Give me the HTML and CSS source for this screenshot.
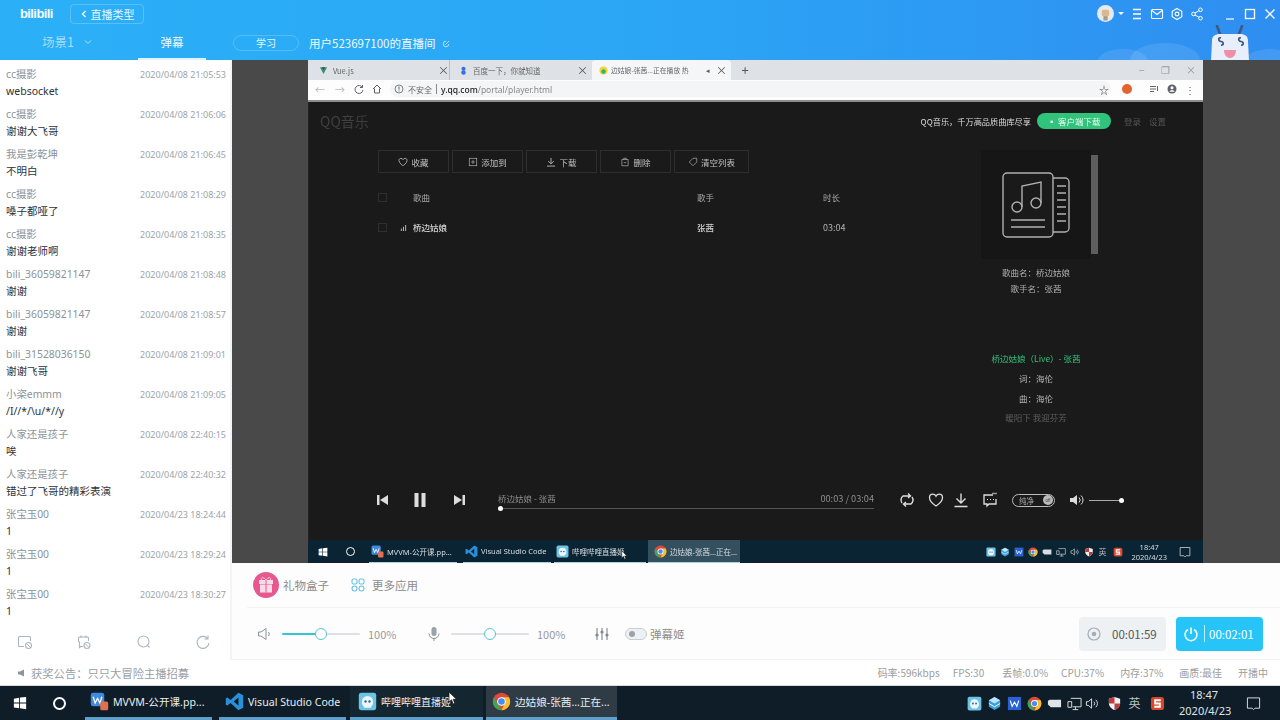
FILE: index.html
```html
<!DOCTYPE html>
<html lang="zh-CN">
<head>
<meta charset="utf-8">
<title>哔哩哔哩直播姬</title>
<link rel="stylesheet" href="styles.css">
</head>
<body>
<svg class="defs" width="0" height="0" aria-hidden="true">
  <symbol id="win" viewBox="0 0 16 16"><path fill="currentColor" d="M1 3l6-1v5.500H1zM8 1.800L15 1v6.500H8zM1 8.500h6V14l-6-1zM8 8.500h7V15l-7-1z"/></symbol>
  <symbol id="chrome" viewBox="0 0 24 24"><circle cx="12" cy="12" r="11" fill="#e0483a"/><path fill="#3aa757" d="M12 23a11 11 0 0 1-9.500-16.500l6 10.500z"/><path fill="#f6c02c" d="M12 23a11 11 0 0 0 9.500-16.500H12l3 10z"/><circle cx="12" cy="12" r="5.500" fill="#fff"/><circle cx="12" cy="12" r="4.200" fill="#4a8df0"/></symbol>
  <symbol id="vs" viewBox="0 0 24 24"><path fill="#2a8fd8" d="M17 1l6 3v16l-6 3L7 14l-4 3-2-1V8l2-1 4 3zM17 7l-6 5 6 5z"/></symbol>
  <symbol id="wps" viewBox="0 0 24 24"><rect x="1" y="1" width="17" height="17" rx="3" fill="#3f8ae0"/><path d="M4 6l2.500 8L9.500 8l3 6L15 6" fill="none" stroke="#fff" stroke-width="1.600"/><rect x="13" y="12" width="10" height="11" rx="2" fill="#e0714f"/></symbol>
  <symbol id="bili" viewBox="0 0 24 24"><rect x="1" y="1" width="22" height="22" rx="3" fill="#6cc3e4"/><path fill="#eaf6fb" d="M5 12a7 7 0 0 1 14 0v3l-3 5H8l-3-5z"/><circle cx="9.500" cy="12" r="1.500" fill="#2a6a90"/><circle cx="14.500" cy="12" r="1.500" fill="#2a6a90"/></symbol>
  <symbol id="box" viewBox="0 0 16 16"><path fill="#3aa0dc" d="M8 1l6 3.500v7L8 15l-6-3.500v-7z"/><path fill="#bfe3f7" d="M8 1l6 3.500L8 8 2 4.500z"/><path fill="none" stroke="#fff" d="M2 8l6 3.500L14 8"/></symbol>
  <symbol id="wbox" viewBox="0 0 16 16"><rect x="1" y="1" width="14" height="14" fill="#2a62d4"/><path d="M3.500 5l2 6L8 6.500l2.500 4.500 2-6" fill="none" stroke="#fff" stroke-width="1.200"/></symbol>
  <symbol id="net" viewBox="0 0 16 16"><path fill="currentColor" d="M1 5l2-1h12v8H4L1 9z"/></symbol>
  <symbol id="mon" viewBox="0 0 16 16"><path fill="none" stroke="currentColor" d="M4 2.500h11v9H6M9 11.500v3M6 14.500h6M1 6h4v6H1z"/></symbol>
  <symbol id="vol" viewBox="0 0 16 16"><path fill="none" stroke="currentColor" d="M1.500 6v4h2L7 13V3L3.500 6zM9.500 6a3 3 0 0 1 0 4M11.500 4a6 6 0 0 1 0 8"/></symbol>
  <symbol id="shield" viewBox="0 0 16 16"><path fill="#eef2f5" d="M8 1l6 2v5c0 3-3 6-6 7-3-1-6-4-6-7V3z"/><path fill="#c23b3b" d="M8 1v7H2V3zM8 8h6c0 3-3 6-6 7z"/></symbol>
  <symbol id="sogou" viewBox="0 0 16 16"><rect x="1" y="1" width="14" height="14" rx="3" fill="#d9472b"/><path fill="none" stroke="#fff" stroke-width="2" d="M11.500 4.500h-6v3.500h5v3.500h-6"/></symbol>
  <symbol id="note" viewBox="0 0 16 16"><path fill="none" stroke="currentColor" d="M1.500 2h13v11h-5L8 14.500 6.500 13h-5z"/></symbol>
  <symbol id="heart" viewBox="0 0 16 16"><path fill="none" stroke="currentColor" stroke-width="1.300" d="M8 14S1.500 9.800 1.500 5.500C1.500 3.500 3 2.200 4.800 2.200 6.200 2.200 7.400 3 8 4.200 8.600 3 9.800 2.200 11.200 2.200c1.800 0 3.300 1.300 3.300 3.300C14.500 9.800 8 14 8 14z"/></symbol>
  <symbol id="dl" viewBox="0 0 16 16"><path fill="none" stroke="currentColor" stroke-width="1.400" d="M8 1.500v9M3.500 6.500L8 11l4.500-4.500M1.500 14.500h13"/></symbol>
  <symbol id="cursor" viewBox="0 0 10 14"><path fill="#fff" stroke="#111" stroke-width=".7" d="M1 1v10l2.500-2.200L5.200 13l1.600-.7L5.200 8.300H8.500z"/></symbol>
</svg>

<div class="app">
  <header class="top">
    <div class="clouds"><i class="c1"></i><i class="c2"></i><i class="c3"></i></div>
    <div class="top-row1">
      <span class="logo">bilibili</span>
      <button class="back"><svg class="ic8" viewBox="0 0 8 8"><path d="M5.500 1L2.500 4l3 3" fill="none" stroke="#fff" stroke-width="1.200"/></svg>直播类型</button>
      <div class="win-tools">
        <span class="avatar"><svg viewBox="0 0 16 16"><circle cx="8" cy="8" r="8" fill="#e6e9ee"/><rect x="4.500" y="4.500" width="7" height="6" rx="1.500" fill="#d9b98f"/><rect x="6" y="10.500" width="4" height="4" fill="#a89a88"/></svg></span>
        <span class="caret"></span>
        <svg class="ic tool-menu" viewBox="0 0 14 14"><path d="M3 2.500h8M3 7h8M3 11.500h8" stroke="#fff" stroke-width="1.300" fill="none"/></svg>
        <svg class="ic" viewBox="0 0 14 14"><rect x="1.500" y="2.500" width="11" height="9" rx="1" fill="none" stroke="#fff" stroke-width="1.100"/><path d="M2 3.500l5 4 5-4" fill="none" stroke="#fff" stroke-width="1.100"/></svg>
        <svg class="ic" viewBox="0 0 14 14"><path d="M7 1.500l4.800 2.700v5.600L7 12.500 2.200 9.800V4.200z" fill="none" stroke="#fff" stroke-width="1.100"/><circle cx="7" cy="7" r="1.900" fill="none" stroke="#fff" stroke-width="1.100"/></svg>
        <svg class="ic" viewBox="0 0 14 14"><circle cx="3.500" cy="7" r="1.800" fill="none" stroke="#fff"/><circle cx="10.500" cy="2.800" r="1.800" fill="none" stroke="#fff"/><circle cx="10.500" cy="11.200" r="1.800" fill="none" stroke="#fff"/><path d="M5 6l4-2.300M5 8l4 2.300" stroke="#fff"/></svg>
        <svg class="ic gap-l" viewBox="0 0 14 14"><path d="M3 12h8" stroke="#fff" stroke-width="1.200"/></svg>
        <svg class="ic" viewBox="0 0 14 14"><rect x="2.500" y="2.500" width="9" height="9" fill="none" stroke="#fff" stroke-width="1.300"/></svg>
        <svg class="ic" viewBox="0 0 14 14"><path d="M2.500 2.500l9 9M11.500 2.500l-9 9" stroke="#fff" stroke-width="1.300"/></svg>
      </div>
    </div>
    <div class="top-row2">
      <span class="scene">场景1<svg class="ic8" viewBox="0 0 8 8"><path d="M1 2.500l3 3 3-3" fill="none" stroke="#bfe3fb" stroke-width="1"/></svg></span>
      <span class="tab-danmu">弹幕</span>
      <span class="study">学习</span>
      <span class="room">用户523697100的直播间</span>
      <svg class="ic8 edit" viewBox="0 0 8 8"><path d="M6.800 4A2.800 2.800 0 1 1 4 1.200M3.500 4.500L7 1" fill="none" stroke="#bfe3fb" stroke-width=".9"/></svg>
    </div>
    <svg class="mascot" viewBox="0 0 44 36">
      <path d="M12 9L9 1M31 9l3-8" stroke="#3e5a82" stroke-width="2.600" fill="none" stroke-linecap="round"/>
      <path d="M4 16c0-5 3-7 8-7h20c5 0 8 2 8 7l1 20H3z" fill="#e9eefb"/>
      <path d="M13 13c-3-1-3 3 0 3.500s3 4 0 3.500M33 13c-3-1-3 3 0 3.500s3 4 0 3.500" stroke="#3e5a82" stroke-width="1.700" fill="none"/>
      <path d="M16 25h12c0 5-3 8-6 8s-6-3-6-8z" fill="#ee8fa6"/>
    </svg>
  </header>

  <div class="main">
    <aside class="side">
      <ul class="msgs">
        <li><div class="meta"><span>cc摄影</span><time>2020/04/08 21:05:53</time></div><p>websocket</p></li>
        <li><div class="meta"><span>cc摄影</span><time>2020/04/08 21:06:06</time></div><p>谢谢大飞哥</p></li>
        <li><div class="meta"><span>我是彭乾坤</span><time>2020/04/08 21:06:45</time></div><p>不明白</p></li>
        <li><div class="meta"><span>cc摄影</span><time>2020/04/08 21:08:29</time></div><p>嗓子都哑了</p></li>
        <li><div class="meta"><span>cc摄影</span><time>2020/04/08 21:08:35</time></div><p>谢谢老师啊</p></li>
        <li><div class="meta"><span>bili_36059821147</span><time>2020/04/08 21:08:48</time></div><p>谢谢</p></li>
        <li><div class="meta"><span>bili_36059821147</span><time>2020/04/08 21:08:57</time></div><p>谢谢</p></li>
        <li><div class="meta"><span>bili_31528036150</span><time>2020/04/08 21:09:01</time></div><p>谢谢飞哥</p></li>
        <li><div class="meta"><span>小栥emmm</span><time>2020/04/08 21:09:05</time></div><p>/I//*/\u/*//y</p></li>
        <li><div class="meta"><span>人家还是孩子</span><time>2020/04/08 22:40:15</time></div><p>唉</p></li>
        <li><div class="meta"><span>人家还是孩子</span><time>2020/04/08 22:40:32</time></div><p>错过了飞哥的精彩表演</p></li>
        <li><div class="meta"><span>张宝玉00</span><time>2020/04/23 18:24:44</time></div><p>1</p></li>
        <li><div class="meta"><span>张宝玉00</span><time>2020/04/23 18:29:24</time></div><p>1</p></li>
        <li><div class="meta"><span>张宝玉00</span><time>2020/04/23 18:30:27</time></div><p>1</p></li>
      </ul>
      <div class="side-tools">
        <svg viewBox="0 0 16 16"><path d="M7 12.500H2.500a1 1 0 0 1-1-1v-8a1 1 0 0 1 1-1h10a1 1 0 0 1 1 1V7" fill="none" stroke="#a9b6c2" stroke-width="1.100"/><circle cx="11.500" cy="11.500" r="3" fill="none" stroke="#a9b6c2" stroke-width="1.100"/><path d="M9.500 9.500l4 4" stroke="#a9b6c2"/></svg>
        <svg viewBox="0 0 16 16"><path d="M7 12.500H4.500l-1 1V8a1 1 0 0 1-1-1V4a1 1 0 0 1 1-1h8a1 1 0 0 1 1 1v3M5 1.500V4M10 1.500V4" fill="none" stroke="#a9b6c2" stroke-width="1.100"/><circle cx="11" cy="11.500" r="3" fill="none" stroke="#a9b6c2" stroke-width="1.100"/><path d="M9 9.500l4 4" stroke="#a9b6c2"/></svg>
        <svg viewBox="0 0 16 16"><circle cx="7.500" cy="7.500" r="5.500" fill="none" stroke="#a9b6c2" stroke-width="1.100"/><path d="M11.500 11.500l2 2" stroke="#a9b6c2" stroke-width="1.100"/></svg>
        <svg viewBox="0 0 16 16"><path d="M13 5a6 6 0 1 0 1 4M13 1.500V5H9.500" fill="none" stroke="#a9b6c2" stroke-width="1.100"/></svg>
      </div>
    </aside>

    <section class="right">
      <div class="stage">
        <div class="video">
          <div class="tabs">
            <div class="tab t1"><svg class="fav" viewBox="0 0 10 10"><path d="M1 1.500h8L5 9z" fill="#3f8f6e"/><path d="M3.300 1.500h3.400L5 4.500z" fill="#34495e"/></svg><span>Vue.js</span><b>×</b></div>
            <div class="tab t2"><svg class="fav" viewBox="0 0 10 10"><circle cx="5" cy="3" r="2.300" fill="#3a6fe0"/><circle cx="5" cy="7.200" r="2.500" fill="#3a6fe0"/></svg><span>百度一下，你就知道</span><b>×</b></div>
            <div class="tab t3"><svg class="fav" viewBox="0 0 10 10"><circle cx="5" cy="5" r="4.500" fill="#f5d33b"/><circle cx="5" cy="6" r="2.500" fill="#31b56d"/></svg><span>边姑娘-张茜...正在播放 热</span><em>◂</em><b>×</b></div>
            <span class="plus">+</span>
            <div class="cw"><span>−</span><span>❐</span><span>×</span></div>
          </div>
          <div class="addr">
            <span class="nav">←</span><span class="nav">→</span>
            <svg class="nav-ic" viewBox="0 0 10 10"><path d="M8.500 3.500A4 4 0 1 0 9 6M8.500 1v2.500H6" fill="none" stroke="#5f6368"/></svg>
            <svg class="nav-ic" viewBox="0 0 10 10"><path d="M1 5l4-4 4 4M2.500 4.500V9h5V4.500" fill="none" stroke="#5f6368"/></svg>
            <div class="omni">
              <svg class="nav-ic" viewBox="0 0 10 10"><circle cx="5" cy="5" r="4" fill="none" stroke="#5f6368" stroke-width=".8"/><path d="M5 2.500v3M5 6.500v1" stroke="#5f6368"/></svg>
              <span class="unsafe">不安全</span><i class="bar"></i><span class="url"><strong>y.qq.com</strong>/portal/player.html</span>
              <span class="star">☆</span>
            </div>
            <i class="ext"></i>
            <svg class="nav-ic" viewBox="0 0 10 10"><path d="M1 2.500h6M1 5h6M1 7.500h4M8.500 2v5" stroke="#5f6368" fill="none"/></svg>
            <svg class="nav-ic" viewBox="0 0 10 10"><circle cx="5" cy="5" r="4.500" fill="#5f6368"/><circle cx="5" cy="3.800" r="1.500" fill="#fff"/><path d="M2.300 7.800a3 3 0 0 1 5.400 0" fill="#fff"/></svg>
            <span class="dots">⋮</span>
          </div>
          <div class="page">
            <div class="page-head">
              <span class="qq">QQ音乐</span>
              <span class="slogan">QQ音乐，千万高品质曲库尽享</span>
              <span class="get">▪ 客户端下载</span>
              <span class="ghost login">登录</span><span class="ghost">设置</span>
            </div>
            <div class="page-body">
              <div class="list">
                <div class="bar-btns">
                  <span class="bbtn"><svg><use href="#heart"/></svg>收藏</span>
                  <span class="bbtn"><svg viewBox="0 0 16 16"><rect x="2" y="2" width="12" height="12" fill="none" stroke="currentColor"/><path d="M8 5v6M5 8h6" stroke="currentColor"/></svg>添加到</span>
                  <span class="bbtn"><svg><use href="#dl"/></svg>下载</span>
                  <span class="bbtn"><svg viewBox="0 0 16 16"><path d="M3 4h10v10H3zM6 4V2h4v2M6 9h4" fill="none" stroke="currentColor"/></svg>删除</span>
                  <span class="bbtn wide"><svg viewBox="0 0 16 16"><path d="M2 8l6-6h6v6l-6 6z" fill="none" stroke="currentColor"/></svg>清空列表</span>
                </div>
                <div class="trow head"><i class="chk"></i><span></span><span>歌曲</span><span>歌手</span><span>时长</span></div>
                <div class="trow song"><i class="chk"></i><svg class="eq" viewBox="0 0 8 8"><path d="M1 8V5h1v3zM3.500 8V3h1v5zM6 8V1h1v7z" fill="#ccc"/></svg><span>桥边姑娘</span><span>张茜</span><span>03:04</span></div>
              </div>
              <div class="info">
                <div class="cover">
                  <svg viewBox="0 0 70 66"><path d="M52 6h12a4 4 0 0 1 4 4v46a4 4 0 0 1-4 4H52" fill="none" stroke="#b0b0b0" stroke-width="1.400"/><rect x="2" y="1" width="50" height="64" rx="4" fill="#1a1a1a" stroke="#b0b0b0" stroke-width="1.400"/><path d="M56 14h9M56 21h9M56 28h9M56 35h9M56 42h9M56 49h9M10 48h34M10 55h34" stroke="#b0b0b0" stroke-width="1.300"/><circle cx="16" cy="35" r="5" fill="none" stroke="#b0b0b0" stroke-width="1.400"/><circle cx="35" cy="31" r="5" fill="none" stroke="#b0b0b0" stroke-width="1.400"/><path d="M21 35V14l19-4v21" fill="none" stroke="#b0b0b0" stroke-width="1.400"/></svg>
                  <i class="thumb-bar"></i>
                </div>
                <p class="meta-line">歌曲名：桥边姑娘</p>
                <p class="meta-line">歌手名：张茜</p>
                <p class="lyric now">桥边姑娘（Live）- 张茜</p>
                <p class="lyric">词：海伦</p>
                <p class="lyric">曲：海伦</p>
                <p class="lyric dim">暖阳下 我迎芬芳</p>
              </div>
            </div>
            <div class="player">
              <svg class="pi first" viewBox="0 0 16 16"><path d="M3 3h2.500v10H3zM14 3v10L6 8z" fill="#ddd"/></svg>
              <svg class="pi" viewBox="0 0 16 16"><path d="M2.500 1H6.500v14H2.500zM9.500 1h4v14h-4z" fill="#ddd"/></svg>
              <svg class="pi next" viewBox="0 0 16 16"><path d="M13 3h-2.500v10H13zM2 3v10l8-5z" fill="#ddd"/></svg>
              <div class="prog">
                <div class="prog-text"><span>桥边姑娘 - 张茜</span><span class="prog-time">00:03 / 03:04</span></div>
                <div class="prog-line"><i></i></div>
              </div>
              <svg class="pi loop" viewBox="0 0 16 16"><path d="M3 11a5 5 0 0 1 1-7h7M9 1.500L11.500 4 9 6M13 5a5 5 0 0 1-1 7H5M7 14.500L4.500 12 7 10" fill="none" stroke="#ddd" stroke-width="1.400"/></svg>
              <svg class="pi ctl"><use href="#heart"/></svg>
              <svg class="pi ctl dl"><use href="#dl"/></svg>
              <svg class="pi ctl" viewBox="0 0 16 16"><path d="M11 3H2v9h3v2l2-2h7V7" fill="none" stroke="#ddd" stroke-width="1.300"/><path d="M5 7.500h1M8 7.500h1M11 7.500h1" stroke="#ddd"/><path d="M10 1.500h5" stroke="#999" stroke-width="1.500"/></svg>
              <span class="pure">纯净<i>off</i></span>
              <svg class="pi ctl-s" viewBox="0 0 16 16"><path d="M1 6v4h3l4 3V3L4 6z" fill="#ddd"/><path d="M10 5.500a3.500 3.500 0 0 1 0 5M12 3.500a6 6 0 0 1 0 9" fill="none" stroke="#ddd"/></svg>
              <div class="vol"><i></i></div>
            </div>
          </div>
          <div class="os">
            <svg class="os-win"><use href="#win"/></svg>
            <i class="os-circle"></i>
            <div class="os-task"><svg><use href="#wps"/></svg>MVVM-公开课.pp...</div>
            <div class="os-task w2"><svg><use href="#vs"/></svg>Visual Studio Code</div>
            <div class="os-task w3"><svg><use href="#bili"/></svg>哔哩哔哩直播姬</div>
            <div class="os-task w3 on"><svg><use href="#chrome"/></svg>边姑娘-张茜...正在...</div>
            <div class="os-tray">
              <svg><use href="#bili"/></svg><svg><use href="#box"/></svg><svg><use href="#wbox"/></svg><svg><use href="#chrome"/></svg><svg><use href="#net"/></svg><svg><use href="#mon"/></svg><svg><use href="#vol"/></svg><svg><use href="#shield"/></svg><span class="ime">英</span><svg class="os-sogou"><use href="#sogou"/></svg>
              <div class="os-clock">18:47<br>2020/4/23</div>
              <svg class="os-note"><use href="#note"/></svg>
            </div>
          </div>
          <svg class="cursor-small"><use href="#cursor"/></svg>
        </div>
      </div>

      <div class="ctrl">
        <div class="ctrl-a">
          <svg class="gift" viewBox="0 0 26 26"><circle cx="13" cy="13" r="13" fill="#e6588e"/><rect x="6" y="8" width="14" height="4" fill="#fbdbe8"/><rect x="7" y="12.500" width="12" height="8" fill="#fbdbe8"/><path d="M13 8v12.500" stroke="#e6588e"/><path d="M13 8c-3-4-6-2-4 0M13 8c3-4 6-2 4 0" fill="none" stroke="#fbdbe8"/></svg>
          <span>礼物盒子</span>
          <svg class="apps" viewBox="0 0 14 14"><g fill="none" stroke="#6cc0e0" stroke-width="1.100"><rect x="1" y="1" width="5" height="5" rx="1.500"/><rect x="8" y="1" width="5" height="5" rx="1.500"/><circle cx="3.500" cy="10.500" r="2.500"/><circle cx="10.500" cy="10.500" r="2.500"/></g></svg>
          <span>更多应用</span>
        </div>
        <div class="ctrl-b">
          <svg class="ci" viewBox="0 0 16 16"><path d="M1.500 6v4h2.500l5 3.500v-11L4 6z" fill="none" stroke="#8a929a"/><path d="M11.500 6a3 3 0 0 1 0 4" fill="none" stroke="#8a929a"/></svg>
          <div class="slider on"><i></i></div>
          <span class="pct">100%</span>
          <svg class="ci mic" viewBox="0 0 16 16"><rect x="5.500" y="1" width="5" height="9" rx="2.500" fill="#9aa2aa"/><path d="M3 7.500a5 5 0 0 0 10 0M8 12.500V15" fill="none" stroke="#8a929a"/></svg>
          <div class="slider"><i></i></div>
          <span class="pct">100%</span>
          <svg class="ci mix" viewBox="0 0 16 16"><path d="M3 2v12M8 2v12M13 2v12" stroke="#7f878f" stroke-width="1.100"/><circle cx="3" cy="9" r="1.600" fill="#7f878f"/><circle cx="8" cy="6" r="1.600" fill="#7f878f"/><circle cx="13" cy="9" r="1.600" fill="#7f878f"/></svg>
          <span class="toggle"><i></i></span>
          <span class="dmj">弹幕姬</span>
          <div class="timer gray"><svg viewBox="0 0 16 16"><circle cx="8" cy="8" r="6" fill="none" stroke="#a5adb5" stroke-width="1.200"/><circle cx="8" cy="8" r="2.300" fill="#a5adb5"/></svg><span>00:01:59</span></div>
          <div class="timer blue"><svg viewBox="0 0 16 16"><path d="M5 3.500a6 6 0 1 0 6 0M8 1.500V8" fill="none" stroke="#fff" stroke-width="1.500"/></svg><i></i><span>00:02:01</span></div>
        </div>
      </div>
    </section>
  </div>

  <div class="status">
    <div class="notice"><svg viewBox="0 0 10 10"><path d="M1 3.500v3h2l4 2v-7l-4 2z" fill="#8c949c"/></svg>获奖公告：只只大冒险主播招募</div>
    <div class="stats"><span>码率:596kbps</span><span>FPS:30</span><span>丢帧:0.0%</span><span>CPU:37%</span><span>内存:37%</span><span>画质:最佳</span><span>开播中</span></div>
  </div>

  <footer class="bar-os">
    <svg class="w-ic"><use href="#win"/></svg>
    <i class="w-circle"></i>
    <div class="task"><svg><use href="#wps"/></svg>MVVM-公开课.pp...</div>
    <div class="task t-vs"><svg><use href="#vs"/></svg>Visual Studio Code</div>
    <div class="task wide"><svg><use href="#bili"/></svg>哔哩哔哩直播姬</div>
    <div class="task on"><svg><use href="#chrome"/></svg>边姑娘-张茜...正在...</div>
    <div class="tray">
      <svg><use href="#bili"/></svg><svg><use href="#box"/></svg><svg><use href="#wbox"/></svg><svg><use href="#chrome"/></svg><svg><use href="#net"/></svg><svg><use href="#mon"/></svg><svg class="vol-ic"><use href="#vol"/></svg><svg class="sh-ic"><use href="#shield"/></svg><span class="ime">英</span><svg class="sg-ic"><use href="#sogou"/></svg>
      <div class="clock">18:47<br>2020/4/23</div>
      <svg class="note"><use href="#note"/></svg>
    </div>
  </footer>
  <svg class="cursor-big"><use href="#cursor"/></svg>
</div>
</body>
</html>
```
FILE: styles.css
```css
* { box-sizing: border-box; }
html, body { margin: 0; padding: 0; }
body { font-family: "Noto Sans", "Noto Sans CJK SC", sans-serif; background: #fff; color: #333; overflow: hidden; }
p, ul { margin: 0; padding: 0; list-style: none; }
.defs { position: absolute; }
.app { position: relative; width: 1280px; height: 720px; display: flex; flex-direction: column; overflow: hidden; }

/* header */
.top { position: relative; height: 60px; flex: none; background: linear-gradient(90deg, #2bb0f7 0%, #2ba6f5 50%, #2f8ef1 100%); color: #fff; overflow: hidden; }
.clouds i { position: absolute; background: rgba(255,255,255,.1); border-radius: 50%; }
.clouds .c1 { left: 1098px; top: 49px; width: 50px; height: 24px; }
.clouds .c2 { left: 1130px; top: 43px; width: 70px; height: 34px; }
.clouds .c3 { left: 1245px; top: 49px; width: 50px; height: 24px; }
.top-row1 { height: 27px; display: flex; align-items: center; padding-left: 20px; }
.logo { width: 50px; font: bold 13px/16px "Liberation Sans", sans-serif; letter-spacing: -.6px; color: #f3fbff; }
.back { width: 74px; height: 20px; display: flex; align-items: center; justify-content: center; gap: 3px; padding: 0; color: #e6f6ff; font: 11px/18px "Noto Sans CJK SC", sans-serif; background: transparent; border: 1px solid rgba(255,255,255,.22); border-radius: 4px; }
.ic8 { width: 8px; height: 8px; flex: none; }
.win-tools { margin-left: auto; display: flex; align-items: center; padding-right: 3px; gap: 6px; }
.avatar { width: 17px; height: 17px; }
.avatar svg { display: block; width: 17px; height: 17px; }
.caret { width: 0; height: 0; margin-left: -2px; border: 3px solid transparent; border-top-color: #fff; border-bottom: 0; }
.ic { width: 14px; height: 14px; flex: none; }
.tool-menu { margin-left: 0; }
.gap-l { margin-left: 13px; }
.top-row2 { position: relative; height: 33px; display: flex; align-items: flex-start; padding-top: 6px; font-size: 12px; line-height: 18px; font-family: "Noto Sans CJK SC", sans-serif; }
.scene { width: 96px; margin-left: 42px; display: flex; align-items: center; gap: 10px; font-size: 12.500px; color: #a9dcfb; }
.tab-danmu { width: 68px; height: 26.500px; margin-left: 0; text-align: center; font-size: 11.500px; border-bottom: 2px solid #dff4ff; color: #f1faff; }
.study { width: 66px; height: 16px; margin: 2px 0 0 27px; border: 1px solid rgba(255,255,255,.2); border-radius: 8px; text-align: center; font-size: 10px; line-height: 14px; color: #e6f6ff; }
.room { margin: 1px 0 0 10px; font-size: 11.500px; color: #eef9ff; white-space: nowrap; }
.edit { margin: 7px 0 0 7px; }
.mascot { position: absolute; left: 1208px; top: 25px; width: 44px; height: 36px; }

/* main */
.main { height: 600px; flex: none; display: flex; }
.side { width: 232px; flex: none; display: flex; flex-direction: column; background: #fff; border-right: 2px solid #f3f4f6; }
.msgs { padding: 6px 4px 0 6px; height: 574px; overflow: hidden; }
.msgs li { height: 40px; }
.meta { display: flex; justify-content: space-between; align-items: center; height: 17px; font-size: 10.400px; line-height: 17px; color: #8b9299; }
.meta time { font-size: 9px; color: #9da3a9; }
.msgs p { font-size: 10.500px; line-height: 17px; height: 17px; color: #2e3338; }
.side-tools { display: flex; justify-content: space-between; padding: 0 19px 0 17px; }
.side-tools svg { width: 16px; height: 16px; }
.right { flex: 1; display: flex; flex-direction: column; min-width: 0; }
.stage { height: 503px; flex: none; background: #494949; padding-left: 76px; }

/* captured video */
.video { position: relative; width: 895px; height: 503px; display: flex; flex-direction: column; filter: blur(.35px); font-family: "Noto Sans CJK SC", sans-serif; }
.tabs { height: 20px; flex: none; display: flex; background: #dee1e6; font-size: 7.500px; color: #666; align-items: stretch; padding-left: 2px; }
.tab { display: flex; align-items: center; gap: 5px; padding: 0 4px 0 9px; }
.tab span { flex: 1; white-space: nowrap; }
.tab b { font-weight: 400; font-size: 11px; color: #555; }
.tab em { font-style: normal; color: #555; margin-right: 3px; }
.t1 { width: 140px; padding-right: 0; border-right: 1px solid #b8bcc2; }
.t2 { width: 142px; }
.t3 { width: 139px; padding-left: 7px; gap: 3px; background: #f5f6f8; border-radius: 4px 4px 0 0; font-size: 6.800px; }
.fav { width: 9px; height: 9px; flex: none; }
.plus { width: 28px; text-align: center; font-size: 13px; line-height: 20px; color: #555; }
.cw { margin-left: auto; width: 64px; display: flex; justify-content: space-between; padding-right: 7px; color: #999; font-size: 10px; line-height: 19px; }
.addr { height: 22px; flex: none; display: flex; align-items: center; gap: 8px; padding: 0 8px 2px 6px; background: #fdfdfd; border-bottom: 2px solid #8e8e8e; color: #b5b8bc; font-size: 10px; }
.nav { width: 12px; text-align: center; }
.nav-ic { width: 10px; height: 10px; flex: none; }
.omni { flex: 1; height: 16px; display: flex; align-items: center; gap: 4px; padding: 0 2px 0 4px; background: #f4f5f6; border-radius: 8px; font-size: 8px; color: #666; }
.omni .bar { width: 1px; height: 10px; background: #888; }
.url { color: #888; font-size: 8.500px; font-family: "Noto Sans", sans-serif; }
.url strong { color: #222; font-weight: 500; }
.star { margin-left: auto; font-size: 10px; color: #555; }
.ext { width: 10px; height: 10px; margin: 0 9px 0 3px; border-radius: 50%; background: #e6622e; flex: none; }
.dots { width: 10px; color: #555; text-align: center; }
.page { flex: 1; min-height: 0; display: flex; flex-direction: column; background: #1a1a1a; border-left: 1px solid #222; }
.page-head { height: 38px; flex: none; display: flex; align-items: center; padding: 0 37px 0 11px; font-size: 8.500px; color: #ddd; }
.qq { font-size: 14px; color: #3e3e3e; }
.slogan { margin-left: auto; font-size: 8.200px; white-space: nowrap; }
.get { width: 74px; height: 16px; margin: 0 13px 0 6px; background: #31c27c; border-radius: 8px; color: #eafff4; text-align: center; line-height: 16px; white-space: nowrap; font-size: 8.500px; }
.ghost { color: #555; }
.login { margin-right: 8px; }
.page-body { height: 340px; flex: none; display: flex; padding-left: 69px; }
.list { width: 602px; flex: none; padding-top: 10px; }
.bar-btns { display: flex; gap: 3px; }
.bbtn { width: 71px; height: 23px; display: flex; align-items: center; justify-content: center; gap: 3px; border: 1px solid #2e2e2e; font-size: 8.500px; color: #c0c0c0; white-space: nowrap; }
.bbtn.wide { width: 75px; }
.bbtn svg { width: 10px; height: 10px; flex: none; }
.trow { height: 30px; display: grid; grid-template-columns: 22px 13px 284px 126px 1fr; align-items: center; font-size: 8.500px; color: #a8a8a8; }
.trow.head { margin-top: 9px; }
.trow.song { color: #d2d2d2; font-weight: 500; }
.trow.song span:last-child { font-weight: 400; color: #b0b0b0; font-size: 9px; }
.chk { width: 9px; height: 9px; border: 1px solid #2f2f2f; }
.eq { width: 7px; height: 7px; }
.info { width: 110px; flex: none; margin-left: 1px; padding-top: 10px; display: flex; flex-direction: column; align-items: center; }
.cover { position: relative; width: 110px; height: 109px; flex: none; background: #161616; display: flex; align-items: center; justify-content: center; }
.cover svg { width: 70px; height: 66px; }
.thumb-bar { position: absolute; left: 110px; top: 5px; width: 7px; height: 99px; background: #5e5e5e; }
.meta-line { height: 16px; font-size: 8.500px; line-height: 16px; color: #b0b0b0; white-space: nowrap; }
.meta-line:first-of-type { margin-top: 5px; }
.lyric { height: 20px; font-size: 8.500px; line-height: 20px; color: #b8b8b8; white-space: nowrap; }
.lyric.now { margin-top: 52px; color: #31c27c; }
.lyric.dim { height: 19px; margin-top: -1px; color: #5e5e5e; }
.player { height: 40px; flex: none; display: flex; align-items: center; }
.pi { width: 16px; height: 16px; flex: none; margin-left: 22px; }
.pi.first { margin-left: 65px; }
.pi.next { margin-left: 24px; }
.pi.loop { margin-left: 25px; }
.pi.ctl { margin-left: 13px; color: #ddd; }
.pi.ctl.dl { margin-left: 9px; }
.pi.ctl-s { margin-left: 14px; }
.prog { width: 376px; flex: none; margin-left: 30px; }
.prog-text { display: flex; justify-content: space-between; font-size: 8.500px; line-height: 12px; color: #8e8e8e; }
.prog-time { font-size: 9.200px; }
.prog-line { position: relative; height: 1px; margin-top: 4px; background: #555; }
.prog-line i { position: absolute; left: 0; top: -2px; width: 5px; height: 5px; border-radius: 50%; background: #fff; }
.pure { width: 43px; height: 13px; margin-left: 14px; display: flex; align-items: center; justify-content: space-between; padding: 0 1px 0 6px; border: 1px solid #bbb; border-radius: 7px; font-size: 7.500px; color: #aaa; }
.pure i { width: 10px; height: 10px; border-radius: 50%; background: #bbb; color: #333; font-style: normal; font-size: 4px; line-height: 10px; text-align: center; }
.vol { position: relative; width: 33px; height: 1px; margin-left: 4px; background: #aaa; }
.vol i { position: absolute; right: -2px; top: -2px; width: 5px; height: 5px; border-radius: 50%; background: #fff; }
.os { height: 23px; flex: none; display: flex; align-items: center; background: #0b2433; color: #d6dde3; font-size: 7.500px; padding-left: 10px; font-family: "Noto Sans", "Noto Sans CJK SC", sans-serif; }
.os-win { width: 10px; height: 10px; color: #fff; }
.os-circle { width: 9px; height: 9px; margin: 0 14px 0 18px; border: 1.500px solid #fff; border-radius: 50%; flex: none; }
.os-task { width: 88px; height: 23px; margin-right: 6px; flex: none; display: flex; align-items: center; gap: 3px; padding: 0 0 0 2px; white-space: nowrap; border-bottom: 1px solid #a8d4ea; }
.os-task svg { width: 13px; height: 13px; flex: none; }
.os-task.w2 { margin-right: 3px; }
.os-task.w3 { width: 92px; margin-right: 2px; }
.os-task.on { background: #34505f; padding-left: 6px; }
.os-tray { margin-left: auto; display: flex; align-items: center; gap: 4px; padding-right: 12px; }
.os-tray > svg { width: 10px; height: 10px; color: #d6dde3; }
.os-tray .ime { font-size: 8px; color: #b0b8be; }
.os-tray .os-sogou { margin-left: 3px; }
.os-clock { margin: 0 8px 0 4px; text-align: center; font-size: 7.500px; line-height: 10px; }
.os-tray .os-note { width: 12px; height: 12px; }
.cursor-small { position: absolute; left: 313px; top: 490px; width: 7px; height: 10px; }

/* controls */
.ctrl { flex: 1; background: #fdfdfe; color: #8c8c8c; font-family: "Noto Sans CJK SC", sans-serif; font-size: 11.500px; border-bottom: 1px solid #f1f2f4; }
.ctrl-a { height: 45px; margin: 0 0 0 15px; padding: 9px 0 0 6px; display: flex; align-items: flex-start; border-bottom: 1px solid #f2f2f3; line-height: 26px; }
.gift { width: 26px; height: 26px; flex: none; margin-right: 4px; }
.apps { width: 14px; height: 14px; flex: none; margin: 6px 7px 0 22px; }
.ctrl-b { height: 51px; padding: 0 17px 0 25px; display: flex; align-items: center; }
.ci { width: 16px; height: 16px; flex: none; }
.slider { position: relative; width: 78px; height: 2px; margin-left: 9px; border-radius: 1px; background: #dbe1e6; }
.slider i { position: absolute; left: 33px; top: -5px; width: 12px; height: 12px; border-radius: 50%; background: #fff; border: 1.500px solid #54c5d8; }
.slider.on { background: linear-gradient(90deg, #34c5d6 0 39px, #dbe1e6 39px); }
.pct { width: 29px; margin-left: 8px; font-size: 11px; color: #9a9a9a; white-space: nowrap; }
.mic { margin-left: 29px; }
.mix { margin-left: 28px; }
.toggle { width: 22px; height: 12px; margin-left: 15px; padding: 2px 3px; border: 1.500px solid #c6cdd3; border-radius: 6px; background: #eef1f3; }
.toggle i { display: block; width: 6px; height: 6px; border-radius: 50%; background: #9aa2aa; }
.dmj { margin-left: 3px; white-space: nowrap; }
.timer { width: 87px; height: 34px; display: flex; align-items: center; padding-left: 7px; border-radius: 4px; font-size: 11.500px; flex: none; }
.timer svg { width: 16px; height: 16px; flex: none; }
.timer.gray { margin-left: auto; background: #eef1f4; color: #555; gap: 10px; }
.timer.blue { margin-left: 10px; background: #27c5f7; color: #fff; gap: 0; }
.timer.blue i { width: 1px; height: 17px; margin: 0 4px 0 5px; background: rgba(255,255,255,.7); }

/* status */
.status { height: 26px; flex: none; display: flex; align-items: center; font-family: "Noto Sans CJK SC", sans-serif; color: #9c9c9c; background: #fff; border-bottom: 1px solid #d8dadc; }
.notice { display: flex; align-items: center; gap: 4px; margin-left: 17px; font-size: 11.300px; color: #9aa0a6; white-space: nowrap; }
.notice svg { width: 10px; height: 10px; flex: none; }
.stats { margin-left: auto; display: flex; padding-right: 12px; gap: 16px; font-size: 10px; white-space: nowrap; }
.stats span:nth-child(2), .stats span:nth-child(4) { margin-left: -3px; }
.stats span:nth-child(3) { margin-left: 2px; }

/* os bar */
.bar-os { height: 34px; flex: 1; display: flex; align-items: center; background: #0e1d27; color: #e8edf0; font-size: 10.600px; padding-left: 13px; font-family: "Noto Sans", "Noto Sans CJK SC", sans-serif; }
.w-ic { width: 14px; height: 14px; color: #fff; flex: none; }
.w-circle { width: 13px; height: 13px; margin: 0 19px 0 26px; border: 2px solid #fff; border-radius: 50%; flex: none; }
.task { width: 127px; height: 34px; margin-right: 7px; flex: none; display: flex; align-items: center; gap: 4px; padding-left: 5px; white-space: nowrap; border-bottom: 3px solid #5f9fcc; }
.task svg { width: 19px; height: 19px; flex: none; }
.task.t-vs { margin-right: 4px; padding-left: 6px; }
.task.wide { width: 133px; margin-right: 3px; background: #14262f; padding-left: 8px; font-size: 10px; }
.task.on { width: 131px; background: #2f3c45; padding-left: 6px; }
.tray { margin-left: auto; display: flex; align-items: center; gap: 5px; padding-right: 19px; color: #dfe4e8; }
.tray > svg { width: 15px; height: 15px; color: #dfe4e8; }
.tray .vol-ic { margin-left: -2px; }
.tray .sh-ic { margin-left: 2px; }
.tray .ime { width: 15px; font-size: 12px; text-align: center; color: #b9c0c5; }
.tray .sg-ic { margin-left: 3px; }
.clock { width: 50px; margin: 0 12px 0 9px; text-align: center; font-size: 11px; line-height: 16px; }
.tray .note { width: 15px; height: 15px; }
.cursor-big { position: absolute; left: 448px; top: 691px; width: 10px; height: 14px; }
```
